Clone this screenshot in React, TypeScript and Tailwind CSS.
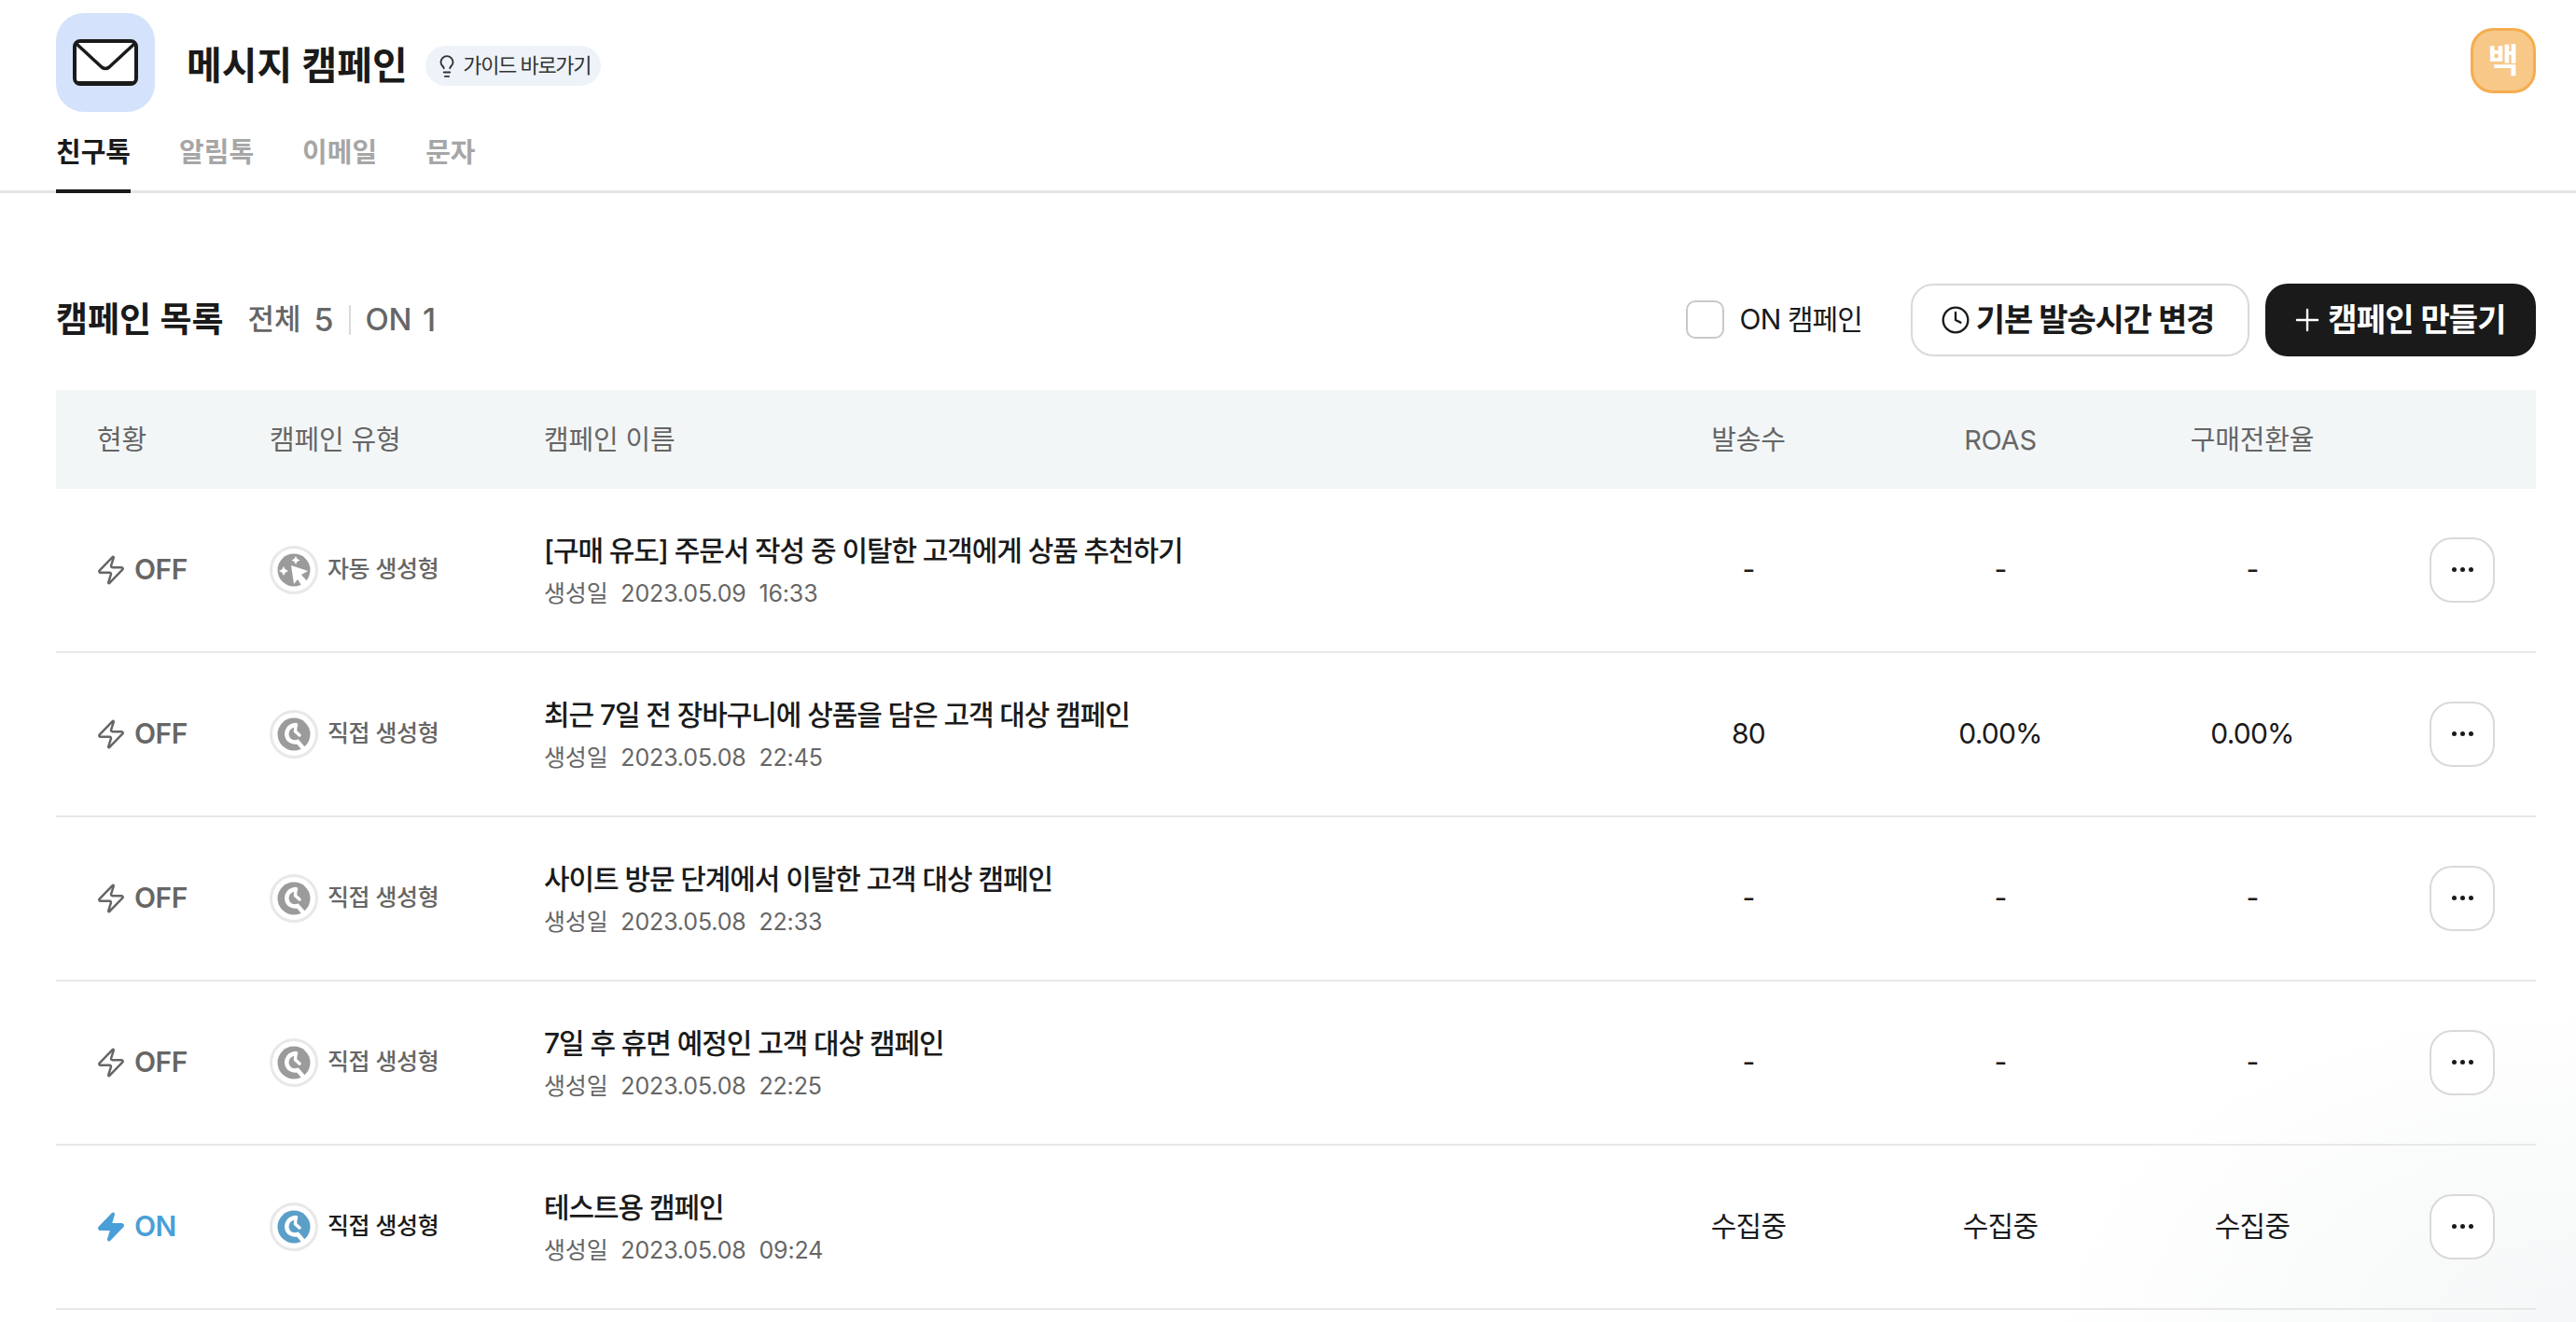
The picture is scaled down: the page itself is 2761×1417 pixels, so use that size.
import { Clock, Lightbulb, Plus, Zap } from "lucide-react";

type Campaign = {
  on?: boolean;
  auto?: boolean;
  name: string;
  created: string;
  sent: string;
  roas: string;
  rate: string;
};

const campaigns: Campaign[] = [
  { auto: true, name: "[구매 유도] 주문서 작성 중 이탈한 고객에게 상품 추천하기", created: "2023.05.09  16:33", sent: "-", roas: "-", rate: "-" },
  { name: "최근 7일 전 장바구니에 상품을 담은 고객 대상 캠페인", created: "2023.05.08  22:45", sent: "80", roas: "0.00%", rate: "0.00%" },
  { name: "사이트 방문 단계에서 이탈한 고객 대상 캠페인", created: "2023.05.08  22:33", sent: "-", roas: "-", rate: "-" },
  { name: "7일 후 휴면 예정인 고객 대상 캠페인", created: "2023.05.08  22:25", sent: "-", roas: "-", rate: "-" },
  { on: true, name: "테스트용 캠페인", created: "2023.05.08  09:24", sent: "수집중", roas: "수집중", rate: "수집중" },
];

const MailIcon = () => (
  <svg width="70" height="50" viewBox="0 0 70 50" fill="none">
    <rect x="2" y="2" width="66" height="46" rx="6" fill="#fff" stroke="#1a1a1a" strokeWidth="4" />
    <path d="M4 5 L31 30 Q35 33 39 30 L66 5" stroke="#1a1a1a" strokeWidth="3.5" strokeLinejoin="round" />
    <path d="M5 47 H65" stroke="#1a1a1a" strokeWidth="4" />
  </svg>
);

// 자동 생성형: 커서 + 반짝이
const CursorBadge = () => (
  <svg width="36" height="36" viewBox="0 0 36 36">
    <circle cx="18" cy="18" r="17.5" fill="#9b9b9b" />
    <path d="M15 13 L33 19 L26 23 L33 31 L27 36 L22 28 L18 33 Z" fill="#fff" />
    <path d="M20 3 L21.5 6 L24.5 7.5 L21.5 9 L20 12 L18.5 9 L15.5 7.5 L18.5 6 Z" fill="#fff" />
    <path d="M7 14 L8.7 17.3 L12 19 L8.7 20.7 L7 24 L5.3 20.7 L2 19 L5.3 17.3 Z" fill="#fff" />
  </svg>
);

// 직접 생성형: 렌치
const WrenchBadge = ({ color }: { color: string }) => (
  <svg width="36" height="36" viewBox="0 0 36 36" fill="none">
    <circle cx="18" cy="18" r="17.5" fill={color} />
    <path
      d="M20 8 C13 8.5 9.5 14 10.5 19.5 C11.5 25 17 27.5 22 26 L28 33"
      stroke="#fff"
      strokeWidth="4.5"
      strokeLinecap="round"
    />
    <path d="M20 8 L19.5 15 L24 19" stroke="#fff" strokeWidth="3.5" strokeLinecap="round" strokeLinejoin="round" />
  </svg>
);

const rowGrid = "grid grid-cols-[229px_294px_1156px_270px_270px_270px_169px] items-center";

const CampaignRow = ({ campaign }: { campaign: Campaign }) => (
  <div className={`${rowGrid} h-[176px] border-b-[2px] border-[#e8e8e8]`}>
    {campaign.on ? (
      <div className="flex items-center gap-[8px] pl-[42px] text-[30px] font-semibold tracking-[-0.5px] text-[#4a9fd8]">
        <Zap size={34} fill="#4a9fd8" strokeWidth={1.75} />
        ON
      </div>
    ) : (
      <div className="flex items-center gap-[8px] pl-[42px] text-[30px] font-semibold tracking-[-0.5px] text-[#666666]">
        <Zap size={34} strokeWidth={1.75} />
        OFF
      </div>
    )}
    <div className={`flex items-center gap-[10px] text-[25px] font-medium tracking-[-0.4px] ${campaign.on ? "text-[#1a1a1a]" : "text-[#666666]"}`}>
      <span className="flex h-[52px] w-[52px] items-center justify-center rounded-full border-[3px] border-[#e8e8e8] bg-white">
        {campaign.auto ? <CursorBadge /> : <WrenchBadge color={campaign.on ? "#5b9fc9" : "#9b9b9b"} />}
      </span>
      {campaign.auto ? "자동 생성형" : "직접 생성형"}
    </div>
    <div className="pt-[2px]">
      <p className="text-[30px] leading-[42px] font-medium tracking-[-1.1px] text-[#1a1a1a]">{campaign.name}</p>
      <p className="mt-[6px] text-[25px] leading-[38px] tracking-[-0.15px] whitespace-pre text-[#666666]">생성일  {campaign.created}</p>
    </div>
    <div className="text-center text-[30px] tracking-[-0.8px] text-[#1a1a1a]">{campaign.sent}</div>
    <div className="text-center text-[30px] tracking-[-0.8px] text-[#1a1a1a]">{campaign.roas}</div>
    <div className="text-center text-[30px] tracking-[-0.8px] text-[#1a1a1a]">{campaign.rate}</div>
    <div className="flex justify-end pr-[44px]">
      <button type="button" className="flex h-[70px] w-[70px] items-center justify-center gap-[4px] rounded-[24px] border-[2px] border-[#d9d9d9] bg-white">
        <span className="h-[5px] w-[5px] rounded-full bg-[#1a1a1a]" />
        <span className="h-[5px] w-[5px] rounded-full bg-[#1a1a1a]" />
        <span className="h-[5px] w-[5px] rounded-full bg-[#1a1a1a]" />
      </button>
    </div>
  </div>
);

export default function App() {
  return (
    <div className="h-[1417px] overflow-hidden bg-[radial-gradient(ellipse_560px_340px_at_100%_100%,#f6f7f8_0%,#fafbfb_55%,#ffffff_100%)] font-['Inter','Noto_Sans_CJK_KR',sans-serif] text-[#1a1a1a]">
      {/* 상단 헤더 */}
      <header className="border-b-[3px] border-[#e5e5e5] px-[43px] pt-[14px]">
        <div className="flex items-start justify-between pl-[17px]">
          <div className="flex items-center">
            <div className="flex h-[106px] w-[106px] items-center justify-center rounded-[30px] bg-[#d4e3fb]">
              <MailIcon />
            </div>
            <h1 className="mt-[7px] ml-[34px] text-[41px] font-semibold">메시지 캠페인</h1>
            <button type="button" className="mt-[7px] ml-[19px] flex h-[43px] w-[188px] items-center justify-center gap-[4px] rounded-full bg-[#eef3f9] text-[22px] tracking-[-1.4px] text-[#333333]">
              <Lightbulb size={26} strokeWidth={1.75} />
              가이드 바로가기
            </button>
          </div>
          <div className="mt-[16px] flex h-[70px] w-[70px] items-center justify-center rounded-[24px] border-[3px] border-[#f5ad50] bg-[#f7c888] text-[36px] font-semibold text-white">
            백
          </div>
        </div>
        <nav className="mt-[22px] flex gap-[52px] pl-[17px] text-[29px] font-semibold text-[#a6a6a6]">
          <span className="-mb-[3px] border-b-[4px] border-[#1a1a1a] pb-[17px] text-[#1a1a1a]">친구톡</span>
          <span>알림톡</span>
          <span>이메일</span>
          <span>문자</span>
        </nav>
      </header>

      <main className="px-[43px] pl-[60px]">
        {/* 목록 툴바 */}
        <div className="mt-[97px] flex h-[78px] items-center justify-between">
          <div className="flex items-center">
            <h2 className="text-[37px] font-semibold">캠페인 목록</h2>
            <span className="ml-[26px] text-[31px] font-medium text-[#666666]">전체</span>
            <span className="ml-[14px] text-[34px] font-medium text-[#666666]">5</span>
            <span className="mx-[16px] h-[32px] w-[2px] bg-[#d9d9d9]" />
            <span className="text-[33px] font-medium tracking-[-0.5px] text-[#666666]">ON</span>
            <span className="ml-[12px] text-[34px] font-medium text-[#666666]">1</span>
          </div>
          <div className="flex items-center">
            <span className="h-[41px] w-[41px] rounded-[10px] border-[2px] border-[#c9c9c9] bg-white" />
            <span className="ml-[17px] text-[30px] tracking-[-0.9px]">ON 캠페인</span>
            <button type="button" className="ml-[52px] flex h-[78px] w-[363px] items-center justify-center gap-[6px] rounded-[24px] border-[2px] border-[#d9d9d9] bg-white pr-[6px] text-[34px] font-semibold tracking-[-1.2px]">
              <Clock size={32} strokeWidth={1.75} />
              기본 발송시간 변경
            </button>
            <button type="button" className="ml-[17px] flex h-[78px] w-[290px] items-center justify-center gap-[3px] rounded-[24px] bg-[#1a1a1a] pr-[6px] text-[34px] font-semibold tracking-[-0.8px] text-white">
              <Plus size={38} strokeWidth={1.5} />
              캠페인 만들기
            </button>
          </div>
        </div>

        {/* 테이블 헤더 */}
        <div className={`${rowGrid} mt-[36px] h-[106px] bg-[#f3f6f7] pt-[2px] text-[29px] tracking-[-0.2px] text-[#666666]`}>
          <div className="pl-[44px]">현황</div>
          <div>캠페인 유형</div>
          <div>캠페인 이름</div>
          <div className="text-center">발송수</div>
          <div className="text-center">ROAS</div>
          <div className="text-center">구매전환율</div>
          <div />
        </div>

        {campaigns.map((campaign) => (
          <CampaignRow key={campaign.created} campaign={campaign} />
        ))}
      </main>
    </div>
  );
}
